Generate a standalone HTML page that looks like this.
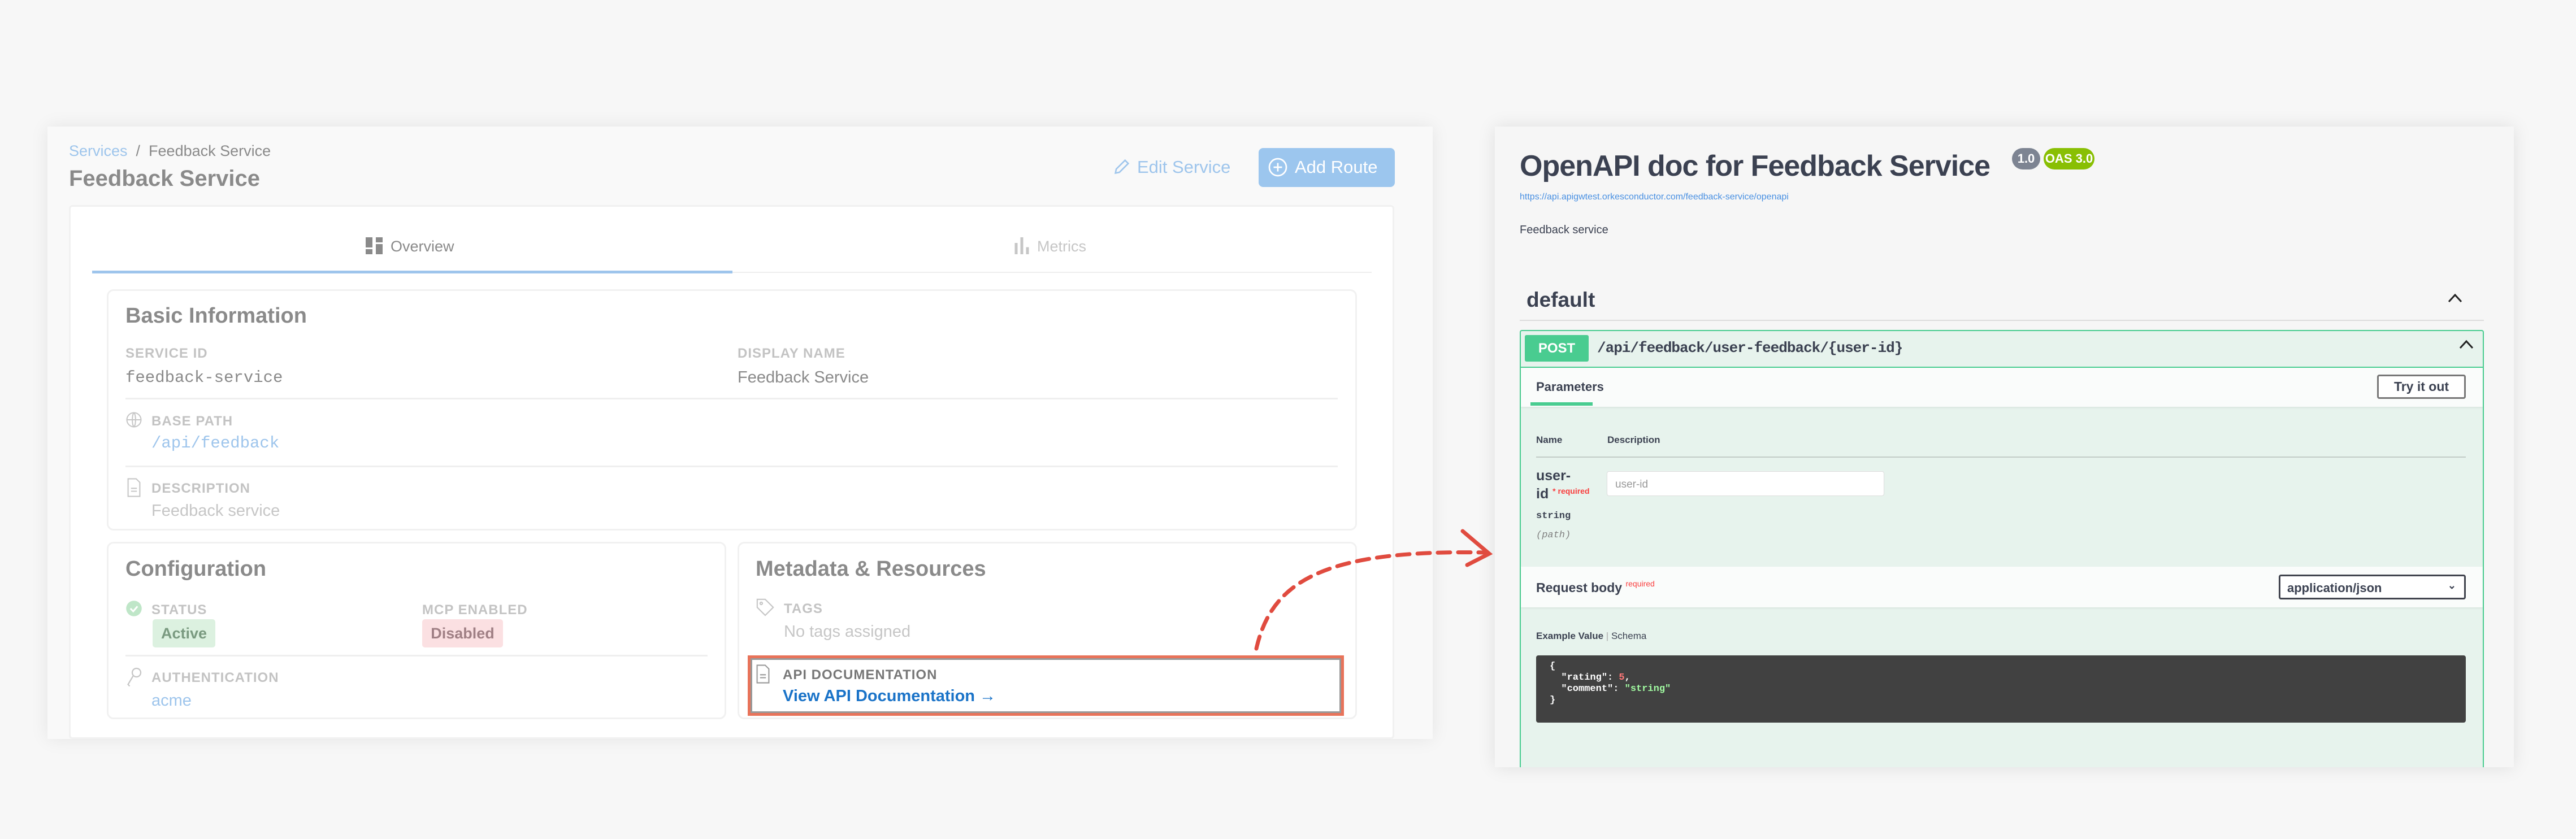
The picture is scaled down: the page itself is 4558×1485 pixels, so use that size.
<!DOCTYPE html>
<html><head><meta charset="utf-8"><style>
*{margin:0;padding:0;box-sizing:border-box}
body{width:4558px;height:1485px;background:#f7f7f7;position:relative;overflow:hidden;font-family:"Liberation Sans",sans-serif}
.a{position:absolute;white-space:nowrap}
.lbl{font-size:24px;color:#c3c3c3;font-weight:bold;letter-spacing:1px}
.mono{font-family:"Liberation Mono",monospace}
.card{position:absolute;background:#fff;border:3px solid #f1f1f1;border-radius:12px}
.hr{position:absolute;height:3px;background:#efefef}
</style></head><body>
<!-- left panel -->
<div class="a" style="left:84px;top:224px;width:2451px;height:1084px;background:#f9f9f9;box-shadow:0 0 30px rgba(0,0,0,.08)"></div>
<div class="a" style="left:122px;top:252px;font-size:27px;color:#9ec5ec">Services <span style="color:#8a8a8a">&nbsp;/&nbsp; Feedback Service</span></div>
<div class="a" style="left:122px;top:294px;font-size:40px;font-weight:bold;color:#8a8a8a">Feedback Service</div>
<div class="a" style="left:1968px;top:278px;font-size:31px;color:#9ec5ec">
<svg width="34" height="34" viewBox="0 0 24 24" style="vertical-align:-6px;margin-right:10px" fill="none" stroke="#9ec5ec" stroke-width="1.8"><path d="M4 20l1-5L16 4l4 4L9 19z"/></svg>Edit Service</div>
<div class="a" style="left:2227px;top:262px;width:241px;height:69px;background:#9cc6ee;border-radius:8px;color:#fff;font-size:31px;padding:16px 0 0 16px">
<svg width="36" height="36" viewBox="0 0 24 24" style="vertical-align:-8px;margin-right:12px" fill="none" stroke="#fff" stroke-width="1.8"><circle cx="12" cy="12" r="10"/><path d="M12 7v10M7 12h10"/></svg>Add Route</div>
<div class="card" style="left:122px;top:363px;width:2345px;height:945px;border-radius:6px"></div>
<!-- tabs -->
<div class="a" style="left:647px;top:420px;font-size:27px;color:#8a8a8a"><svg width="30" height="30" viewBox="0 0 10 10" style="vertical-align:-5px;margin-right:14px"><path fill="#8a8a8a" d="M0 0h4v6H0zM6 0h4v3H6zM6 4h4v6H6zM0 7h4v3H0z"/></svg>Overview</div>
<div class="a" style="left:1795px;top:420px;font-size:27px;color:#c6c6c6"><svg width="26" height="30" viewBox="0 0 10 12" style="vertical-align:-5px;margin-right:14px"><path fill="#c6c6c6" d="M0 4h2v8H0zM4 0h2v12H4zM8 7h2v5H8z"/></svg>Metrics</div>
<div class="a" style="left:163px;top:479px;width:1133px;height:5px;background:#9ec5ec"></div>
<div class="a" style="left:1296px;top:481px;width:1131px;height:2px;background:#eee"></div>
<!-- basic info -->
<div class="card" style="left:189px;top:512px;width:2212px;height:427px"></div>
<div class="a" style="left:222px;top:538px;font-size:38px;font-weight:bold;color:#8a8a8a">Basic Information</div>
<div class="a lbl" style="left:222px;top:612px">SERVICE ID</div>
<div class="a mono" style="left:222px;top:652px;font-size:29px;color:#8a8a8a">feedback-service</div>
<div class="a lbl" style="left:1305px;top:612px">DISPLAY NAME</div>
<div class="a" style="left:1305px;top:652px;font-size:29px;color:#8a8a8a">Feedback Service</div>
<div class="hr" style="left:222px;top:704px;width:2145px"></div>
<div class="a" style="left:222px;top:728px"><svg width="30" height="30" viewBox="0 0 24 24" fill="none" stroke="#c6c6c6" stroke-width="1.6"><circle cx="12" cy="12" r="10"/><path d="M2 12h20M12 2c3 3 3 17 0 20M12 2c-3 3-3 17 0 20"/></svg></div>
<div class="a lbl" style="left:268px;top:732px">BASE PATH</div>
<div class="a mono" style="left:268px;top:768px;font-size:29px;color:#9ec5ec">/api/feedback</div>
<div class="hr" style="left:222px;top:824px;width:2145px"></div>
<div class="a" style="left:224px;top:846px"><svg width="26" height="34" viewBox="0 0 20 26" fill="none" stroke="#c6c6c6" stroke-width="1.6"><path d="M2 1h11l5 5v19H2zM6 14h8M6 18h8"/></svg></div>
<div class="a lbl" style="left:268px;top:851px">DESCRIPTION</div>
<div class="a" style="left:268px;top:888px;font-size:29px;color:#c6c6c6">Feedback service</div>
<!-- configuration -->
<div class="card" style="left:189px;top:959px;width:1096px;height:314px"></div>
<div class="a" style="left:222px;top:986px;font-size:38px;font-weight:bold;color:#8a8a8a">Configuration</div>
<div class="a" style="left:222px;top:1062px"><svg width="30" height="30" viewBox="0 0 24 24"><circle cx="12" cy="12" r="11" fill="#bfe6c8"/><path d="M7 12l4 4 6-7" fill="none" stroke="#fff" stroke-width="2.4"/></svg></div>
<div class="a lbl" style="left:268px;top:1066px">STATUS</div>
<div class="a" style="left:270px;top:1096px;width:111px;height:50px;background:#dcf1e0;border-radius:5px;color:#7a9a80;font-size:27px;font-weight:bold;text-align:center;line-height:50px">Active</div>
<div class="a lbl" style="left:747px;top:1066px">MCP ENABLED</div>
<div class="a" style="left:747px;top:1096px;width:143px;height:50px;background:#fbe0e2;border-radius:5px;color:#a08085;font-size:27px;font-weight:bold;text-align:center;line-height:50px">Disabled</div>
<div class="hr" style="left:222px;top:1159px;width:1030px"></div>
<div class="a" style="left:222px;top:1180px"><svg width="30" height="36" viewBox="0 0 20 24" fill="none" stroke="#c6c6c6" stroke-width="1.5"><circle cx="13" cy="7" r="5"/><path d="M9 11L3 21l2 2"/></svg></div>
<div class="a lbl" style="left:268px;top:1186px">AUTHENTICATION</div>
<div class="a" style="left:268px;top:1224px;font-size:29px;color:#9ec5ec">acme</div>
<!-- metadata -->
<div class="card" style="left:1305px;top:959px;width:1096px;height:314px"></div>
<div class="a" style="left:1337px;top:986px;font-size:38px;font-weight:bold;color:#8a8a8a">Metadata &amp; Resources</div>
<div class="a" style="left:1337px;top:1058px"><svg width="34" height="34" viewBox="0 0 24 24" fill="none" stroke="#c6c6c6" stroke-width="1.5"><path d="M2 2h10l10 10-10 10L2 12z"/><circle cx="7" cy="7" r="1.5"/></svg></div>
<div class="a lbl" style="left:1387px;top:1064px">TAGS</div>
<div class="a" style="left:1387px;top:1102px;font-size:29px;color:#c6c6c6">No tags assigned</div>
<div class="a" style="left:1323px;top:1160px;width:1055px;height:107px;border:5px solid #e8735a;background:#fff;box-shadow:inset 0 0 0 3px #999"></div>
<div class="a" style="left:1337px;top:1176px"><svg width="26" height="34" viewBox="0 0 20 26" fill="none" stroke="#999" stroke-width="1.6"><path d="M2 1h11l5 5v19H2zM6 14h8M6 18h8"/></svg></div>
<div class="a" style="left:1385px;top:1181px;font-size:24px;font-weight:bold;color:#777;letter-spacing:1px">API DOCUMENTATION</div>
<div class="a" style="left:1385px;top:1216px;font-size:29px;font-weight:bold;color:#1a73c8">View API Documentation →</div>
<!-- right panel -->
<div class="a" style="left:2645px;top:224px;width:1803px;height:1134px;background:#f6f6f6;box-shadow:0 0 30px rgba(0,0,0,.1)"></div>
<div class="a" style="left:2689px;top:264px;font-size:52px;font-weight:bold;color:#3b4151;letter-spacing:-1px">OpenAPI doc for Feedback Service</div>
<div class="a" style="left:3560px;top:262px;width:50px;height:38px;background:#7d8492;border-radius:19px;color:#fff;font-size:22px;font-weight:bold;text-align:center;line-height:38px">1.0</div>
<div class="a" style="left:3616px;top:262px;width:90px;height:38px;background:#89bf04;border-radius:19px;color:#fff;font-size:22px;font-weight:bold;text-align:center;line-height:38px">OAS 3.0</div>
<div class="a" style="left:2689px;top:340px;font-size:16px;color:#4990e2">https://api.apigwtest.orkesconductor.com/feedback-service/openapi</div>
<div class="a" style="left:2689px;top:396px;font-size:20px;color:#3b4151">Feedback service</div>
<div class="a" style="left:2701px;top:510px;font-size:37px;font-weight:bold;color:#3b4151">default</div>
<div class="a" style="left:4330px;top:518px"><svg width="28" height="20" viewBox="0 0 28 20"><path d="M3 16L14 4l11 12" fill="none" stroke="#222" stroke-width="3"/></svg></div>
<div class="a" style="left:2689px;top:566px;width:1706px;height:2px;background:#ddd"></div>
<div class="a" style="left:2689px;top:584px;width:1706px;height:774px;background:#e7f3ed;border:2px solid #49cc90;border-bottom:none;border-radius:4px 4px 0 0"></div>
<div class="a" style="left:2691px;top:649px;width:1702px;height:2px;background:#49cc90"></div>
<div class="a" style="left:2698px;top:593px;width:113px;height:47px;background:#49cc90;border-radius:3px;color:#fff;font-size:24px;font-weight:bold;text-align:center;line-height:47px">POST</div>
<div class="a mono" style="left:2826px;top:601px;font-size:26px;font-weight:bold;color:#3b4151;letter-spacing:-1px">/api/feedback/user-feedback/{user-id}</div>
<div class="a" style="left:4350px;top:600px"><svg width="28" height="20" viewBox="0 0 28 20"><path d="M3 16L14 4l11 12" fill="none" stroke="#222" stroke-width="3"/></svg></div>
<div class="a" style="left:2691px;top:651px;width:1702px;height:69px;background:#fafcfb;box-shadow:0 2px 3px rgba(0,0,0,.06)"></div>
<div class="a" style="left:2718px;top:672px;font-size:22px;font-weight:bold;color:#3b4151">Parameters</div>
<div class="a" style="left:2708px;top:712px;width:110px;height:6px;background:#49cc90"></div>
<div class="a" style="left:4206px;top:663px;width:157px;height:43px;border:3px solid #777;border-radius:4px;font-size:23px;font-weight:bold;color:#3b4151;text-align:center;line-height:37px;background:#fff">Try it out</div>
<div class="a" style="left:2718px;top:769px;font-size:17px;font-weight:bold;color:#3b4151">Name</div>
<div class="a" style="left:2844px;top:769px;font-size:17px;font-weight:bold;color:#3b4151">Description</div>
<div class="a" style="left:2718px;top:808px;width:1645px;height:2px;background:#c3ccc7"></div>
<div class="a" style="left:2718px;top:828px;font-size:25px;font-weight:bold;color:#3b4151">user-</div>
<div class="a" style="left:2718px;top:860px;font-size:25px;font-weight:bold;color:#3b4151">id <span style="color:#f93e3e;font-size:14px;vertical-align:8px">* required</span></div>
<div class="a mono" style="left:2718px;top:904px;font-size:17px;font-weight:bold;color:#3b4151">string</div>
<div class="a mono" style="left:2718px;top:938px;font-size:17px;font-style:italic;color:#808080">(path)</div>
<div class="a" style="left:2843px;top:834px;width:491px;height:44px;background:#fff;border:1px solid #ddd;border-radius:4px;font-size:19px;color:#999;padding:12px 0 0 14px">user-id</div>
<div class="a" style="left:2691px;top:1003px;width:1702px;height:72px;background:#fafcfb;box-shadow:0 2px 3px rgba(0,0,0,.06)"></div>
<div class="a" style="left:2718px;top:1025px;font-size:23px;font-weight:bold;color:#3b4151">Request body <span style="color:#f93e3e;font-size:14px;vertical-align:10px;font-weight:normal">required</span></div>
<div class="a" style="left:4032px;top:1017px;width:331px;height:44px;border:3px solid #41444e;border-radius:4px;background:#fff;font-size:22px;font-weight:bold;color:#3b4151;padding:8px 0 0 12px">application/json<span style="position:absolute;right:14px;top:6px;font-size:18px">⌄</span></div>
<div class="a" style="left:2718px;top:1116px;font-size:17px;font-weight:bold;color:#3b4151">Example Value <span style="color:#aaa;font-weight:normal">|</span> <span style="font-weight:normal">Schema</span></div>
<div class="a mono" style="left:2718px;top:1160px;width:1645px;height:119px;background:#414141;border-radius:4px;color:#fff;font-size:17px;font-weight:bold;line-height:20px;padding:10px 0 0 24px;white-space:pre">{
  "rating": <span style="color:#f77">5</span>,
  "comment": <span style="color:#a2fca2">"string"</span>
}</div>
<!-- arrow -->
<svg class="a" style="left:0;top:0" width="4558" height="1485"><g fill="none" stroke="#e04b3f" stroke-width="7" stroke-linecap="round"><path d="M2223 1148 C2250 1030 2340 972 2630 978" stroke-dasharray="22 14"/><path d="M2588 940 L2635 980 L2596 1000"/></g></svg>
</body></html>
